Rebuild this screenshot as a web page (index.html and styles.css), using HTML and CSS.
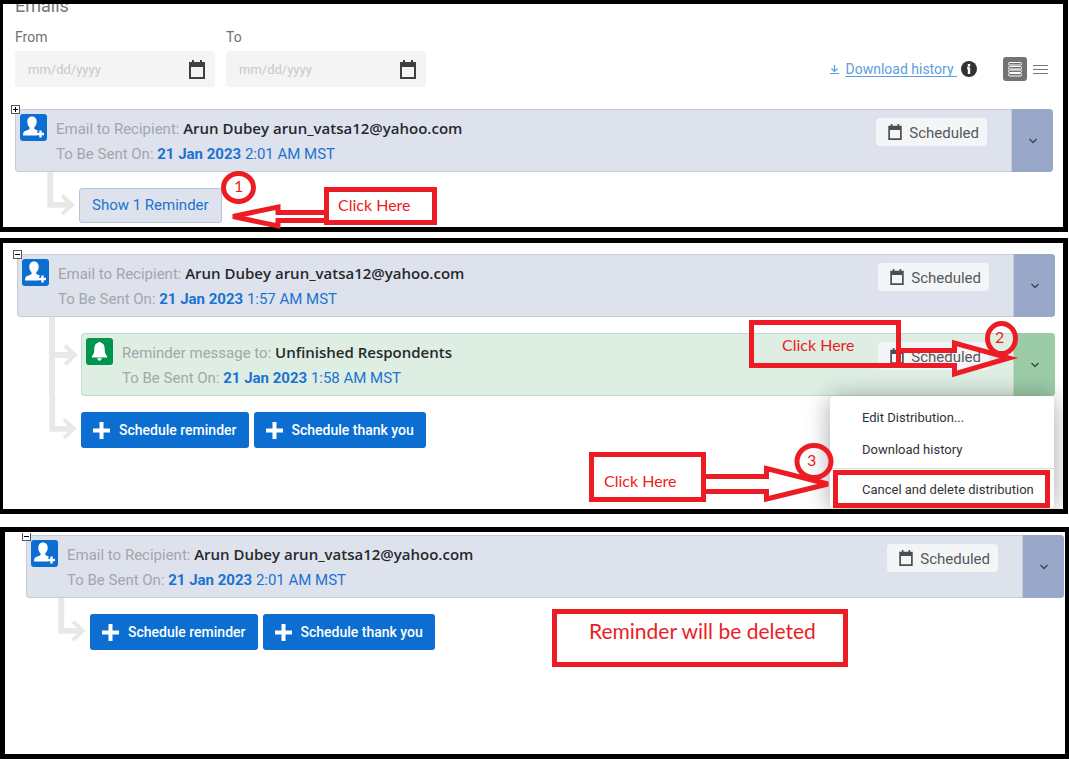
FILE: index.html
```html
<!DOCTYPE html>
<html lang="en">
<head>
<meta charset="utf-8">
<title>Emails</title>
<link rel="stylesheet" href="styles.css">
</head>
<body>
<svg class="defs" aria-hidden="true">
  <symbol id="calendar" viewBox="0 0 16 19"><path d="M3 0h2v2h6V0h2v2h3v17H0V2h3zM2 7v10h12V7z" fill="currentColor" fill-rule="evenodd"/></symbol>
  <symbol id="chevron" viewBox="0 0 10 6"><path d="M1.500 1l3.500 3.500L8.500 1" fill="none" stroke="currentColor" stroke-width="1.300"/></symbol>
  <symbol id="person" viewBox="0 0 27 27"><path d="M12 2.500c3 0 4.700 2.200 4.700 5.200 0 2.400-1.100 4.500-2.400 5.600v1.700l3.400 1.400v2.300h1.800v2.800H3c0-3 .8-4 2.900-4.700l3.600-1.500v-2c-1.300-1.100-2.200-3.200-2.200-5.600 0-3 1.700-5.200 4.700-5.200z" fill="#fff"/><path d="M20.500 16.500v7M17 20h7" stroke="#0b6ed0" stroke-width="4.600"/><path d="M20.500 16.500v7M17 20h7" stroke="#fff" stroke-width="2.400"/></symbol>
  <symbol id="bell" viewBox="0 0 27 27"><path d="M12.300 4.500q1.200-1.400 2.400 0c3 .8 4 3.200 4 6.500 0 4 .8 5.500 2.300 7v1.500H6V18c1.500-1.500 2.300-3 2.300-7 0-3.300 1-5.700 4-6.500zM11.200 20.300h4.600c-.3 1.700-1.200 2.400-2.300 2.400s-2-.7-2.300-2.400z" fill="#fff"/></symbol>
  <symbol id="plus" viewBox="0 0 17 17"><path d="M8.500 0v17M0 8.500h17" stroke="currentColor" stroke-width="4"/></symbol>
  <symbol id="branch-through" viewBox="0 0 32 79"><path d="M3 0v79M3 38h23" fill="none" stroke="#e8e8e8" stroke-width="6"/><path d="M16 28.500l10 9.500-10 9.500" fill="none" stroke="#e8e8e8" stroke-width="4"/></symbol>
  <symbol id="branch-end" viewBox="0 0 32 52"><path d="M3 0v33.500h22" fill="none" stroke="#e8e8e8" stroke-width="6"/><path d="M15 24l10 9.500-10 9.500" fill="none" stroke="#e8e8e8" stroke-width="4"/></symbol>
</svg>

<section class="panel panel-collapsed">
  <header class="title-clip"><h1 class="title">Emails</h1></header>
  <div class="filters">
    <div class="field">
      <label for="from">From</label>
      <div class="date-box"><input id="from" type="text" placeholder="mm/dd/yyyy"><svg class="date-icon"><use href="#calendar"/></svg></div>
    </div>
    <div class="field">
      <label for="to">To</label>
      <div class="date-box"><input id="to" type="text" placeholder="mm/dd/yyyy"><svg class="date-icon"><use href="#calendar"/></svg></div>
    </div>
    <div class="tools">
      <svg class="download-icon" viewBox="0 0 11 11"><path d="M5.500 1v6M2.500 4.500l3 3 3-3M1 9.500h9" fill="none" stroke="#5aa0e0" stroke-width="1.200"/></svg>
      <a class="download" href="#">Download history&nbsp;</a>
      <svg class="info-icon" viewBox="0 0 16 16"><circle cx="8" cy="8" r="8" fill="#333"/><path d="M8 3v2.400M8 6.500V13M6.200 7H8" stroke="#fff" stroke-width="2.400" fill="none"/></svg>
      <button class="view view-cards" aria-label="Card view"><svg viewBox="0 0 24 24"><g fill="none" stroke="#fff"><rect x="5.500" y="5.500" width="13" height="2.500" rx="1"/><rect x="5.500" y="9.500" width="13" height="2.500" rx="1"/><rect x="5.500" y="13" width="13" height="2.500" rx="1"/><rect x="5.500" y="16.500" width="13" height="2.500" rx="1"/></g></svg></button>
      <button class="view view-rows" aria-label="Row view"><svg viewBox="0 0 15 24"><path d="M0 8.500h15M0 12.500h15M0 16.500h15" stroke="#777"/></svg></button>
    </div>
  </div>
  <article class="card">
    <button class="expander" aria-label="Expand"><svg viewBox="0 0 9 9"><path d="M4.500 2v5M2 4.500h5" stroke="#000"/></svg></button>
    <svg class="avatar"><use href="#person"/></svg>
    <div class="info">
      <p>Email to Recipient: <strong>Arun Dubey arun_vatsa12@yahoo.com</strong></p>
      <p>To Be Sent On: <span class="when"><strong>21 Jan 2023</strong> 2:01 AM MST</span></p>
    </div>
    <span class="badge"><svg class="badge-icon"><use href="#calendar"/></svg>Scheduled</span>
    <button class="toggle" aria-label="Options"><svg class="chevron"><use href="#chevron"/></svg></button>
  </article>
  <div class="branch">
    <svg class="branch-end"><use href="#branch-end"/></svg>
    <button class="show">Show 1 Reminder</button>
  </div>
  <svg class="notes notes-first" viewBox="217 168 224 63">
    <rect x="326.500" y="189.500" width="108" height="33"/>
    <ellipse cx="238.500" cy="187.500" rx="15" ry="14"/>
    <path d="M324 212.500H278V207L233 216.500L278 226V220.500H324"/>
    <text x="234" y="192">1</text><text x="338" y="211">Click Here</text>
  </svg>
</section>

<section class="panel panel-expanded">
  <article class="card">
    <button class="expander" aria-label="Collapse"><svg viewBox="0 0 9 9"><path d="M2 4.500h5" stroke="#000"/></svg></button>
    <svg class="avatar"><use href="#person"/></svg>
    <div class="info">
      <p>Email to Recipient: <strong>Arun Dubey arun_vatsa12@yahoo.com</strong></p>
      <p>To Be Sent On: <span class="when"><strong>21 Jan 2023</strong> 1:57 AM MST</span></p>
    </div>
    <span class="badge"><svg class="badge-icon"><use href="#calendar"/></svg>Scheduled</span>
    <button class="toggle" aria-label="Options"><svg class="chevron"><use href="#chevron"/></svg></button>
  </article>
  <div class="branch">
    <svg class="branch-through"><use href="#branch-through"/></svg>
    <article class="card card-reminder">
      <svg class="avatar"><use href="#bell"/></svg>
      <div class="info">
        <p>Reminder message to: <strong>Unfinished Respondents</strong></p>
        <p>To Be Sent On: <span class="when"><strong>21 Jan 2023</strong> 1:58 AM MST</span></p>
      </div>
      <span class="badge"><svg class="badge-icon"><use href="#calendar"/></svg>Scheduled</span>
      <button class="toggle" aria-label="Options"><svg class="chevron"><use href="#chevron"/></svg></button>
      <div class="menu">
        <button>Edit Distribution...</button>
        <button>Download history</button>
        <hr>
        <button>Cancel and delete distribution</button>
      </div>
    </article>
  </div>
  <div class="branch">
    <svg class="branch-end"><use href="#branch-end"/></svg>
    <div class="actions">
      <button class="primary"><svg class="plus"><use href="#plus"/></svg>Schedule reminder</button>
      <button class="primary"><svg class="plus"><use href="#plus"/></svg>Schedule thank you</button>
    </div>
  </div>
  <svg class="notes notes-second" viewBox="580 243 483 266">
    <rect x="751.500" y="322.500" width="147" height="43"/>
    <path d="M901 350.500H954.500V343L1009 358L954.500 374V365.500H901"/>
    <ellipse cx="1001.500" cy="338.500" rx="14" ry="15"/>
    <rect x="591.500" y="454.500" width="112" height="45"/>
    <path d="M706 476.500H766.500V468.500L828 484L766.500 499V491.500H706"/>
    <ellipse cx="814" cy="461.500" rx="17" ry="16"/>
    <rect x="835.500" y="472.500" width="212" height="33"/>
    <text x="782" y="351">Click Here</text><text x="995" y="343">2</text>
    <text x="604" y="487">Click Here</text><text x="807" y="466">3</text>
  </svg>
</section>

<section class="panel panel-deleted">
  <article class="card">
    <button class="expander expander-cut" aria-label="Collapse"><svg viewBox="0 0 9 9"><path d="M2 4.500h5" stroke="#000"/></svg></button>
    <svg class="avatar"><use href="#person"/></svg>
    <div class="info">
      <p>Email to Recipient: <strong>Arun Dubey arun_vatsa12@yahoo.com</strong></p>
      <p>To Be Sent On: <span class="when"><strong>21 Jan 2023</strong> 2:01 AM MST</span></p>
    </div>
    <span class="badge"><svg class="badge-icon"><use href="#calendar"/></svg>Scheduled</span>
    <button class="toggle" aria-label="Options"><svg class="chevron"><use href="#chevron"/></svg></button>
  </article>
  <div class="branch">
    <svg class="branch-end"><use href="#branch-end"/></svg>
    <div class="actions">
      <button class="primary"><svg class="plus"><use href="#plus"/></svg>Schedule reminder</button>
      <button class="primary"><svg class="plus"><use href="#plus"/></svg>Schedule thank you</button>
    </div>
  </div>
  <div class="result">Reminder will be deleted</div>
</section>
</body>
</html>
```
FILE: styles.css
```css
* { box-sizing: border-box; }
body { margin: 0; background: #fff; font: 15px/25px Roboto, "Open Sans", sans-serif; color: #a3a6a9; }
button, input { font: inherit; border: 0; padding: 0; margin: 0; background: none; }
p, h1 { margin: 0; }
svg { display: block; flex: none; }
.defs { position: absolute; width: 0; height: 0; }

.panel { position: relative; border: 5px solid #000; border-left-width: 3px; margin-right: 1px; }
.panel-collapsed { border-top-width: 4px; padding: 0 10px 4px 12px; }
.panel-expanded { margin-top: 6px; padding: 11px 8px 61px 14px; overflow: hidden; }
.panel-deleted { margin: 13px 0 0; border-left-width: 5px; border-right-width: 4px; padding: 3px 1px 104px 21px; }

.title-clip { overflow: hidden; }
.title { margin-top: -10px; font-size: 18px; font-weight: 400; line-height: 24px; color: #777; }
.filters { display: flex; align-items: flex-end; gap: 11px; padding: 9px 5px 22px 0; }
.field { width: 200px; }
.field label { display: block; font-size: 14px; line-height: 20px; margin-bottom: 4px; color: #6e7276; }
.date-box { display: flex; align-items: center; height: 36px; padding: 0 10px 0 13px; border-radius: 4px; background: #f4f4f4; }
.date-box input { flex: 1; min-width: 0; font-size: 13px; outline: 0; }
.date-box input::placeholder { color: #c8c8c8; opacity: 1; }
.date-icon { width: 16px; height: 19px; color: #404040; }
.tools { display: flex; align-items: center; height: 36px; margin-left: auto; font-size: 14px; }
.download-icon { width: 11px; height: 11px; margin-right: 5px; }
.download { color: #5aa0e0; text-underline-offset: 2px; text-decoration-skip-ink: none; }
.info-icon { width: 16px; height: 16px; margin: 0 26px 0 4px; }
.view svg { height: 24px; }
.view-cards { border-radius: 3px; background: #737373; }
.view-cards svg { width: 24px; }
.view-rows { margin-left: 6px; }
.view-rows svg { width: 15px; }

.card { position: relative; display: flex; align-items: flex-start; flex: 1; border: 1px solid #c6cbd8; border-right: 0; border-radius: 4px; background: #dee2ec; }
.avatar { width: 27px; height: 27px; margin: 4px 9px 0 4px; border-radius: 3px; background: #0b6ed0; }
.info { flex: 1; padding: 7px 0 4px; }
.info p { height: 25px; }
.info strong { font-family: "Open Sans", sans-serif; font-weight: 600; line-height: 20px; color: #26292c; }
.info .when, .info .when strong { color: #1a73d2; }
.info .when strong { font-family: inherit; font-weight: 700; }
.badge { display: flex; align-items: center; gap: 7px; height: 28px; margin: 8px 24px 0 0; padding: 2px 8px 0 12px; border-radius: 4px; background: #f4f5f7; color: #54585c; }
.badge-icon { width: 14px; height: 16px; color: #4a4e52; margin-bottom: 2px; }
.toggle { display: flex; align-items: center; justify-content: center; align-self: stretch; width: 42px; margin: -1px 0; border-left: 1px solid #c6cbd8; border-radius: 0 4px 4px 0; background: #99a7c9; color: #3a4350; }
.chevron { width: 10px; height: 6px; }
.expander { position: absolute; left: -5px; top: -5px; width: 9px; height: 9px; background: #fff; outline: 1px solid #555; outline-offset: -1px; }
.expander svg { width: 9px; height: 9px; }
.expander-cut { top: -4px; clip-path: inset(1px 0 0); }
.card-reminder { border-color: #c5dacb; background: #deeee3; }
.card-reminder .avatar { background: #00954c; }
.card-reminder .toggle { border-color: #c5dacb; background: #9bcba7; }

.branch { display: flex; margin-left: 32px; }
.branch > :not(svg) { margin-top: 16px; }
.branch-end { width: 32px; height: 51px; }
.branch-through { width: 32px; height: 79px; }
.show { height: 35px; padding: 0 12px; border: 1px solid #b8c3da; border-radius: 3px; background: #dee2ec; color: #1a73d2; }
.actions { display: flex; gap: 5px; }
.primary { display: flex; align-items: center; gap: 9px; height: 36px; padding: 0 12px; border-radius: 3px; background: #0b6ed0; color: #fff; font-size: 14px; font-weight: 500; }
.plus { width: 17px; height: 17px; }

.menu { position: absolute; top: 62px; right: 1px; width: 224px; padding: 5px 0 3px; border-radius: 4px; background: #fff; box-shadow: 0 2px 24px rgba(0, 0, 0, .35); }
.menu button { display: block; width: 100%; height: 32px; padding-left: 32px; text-align: left; font-size: 13px; color: #303336; }
.menu hr { margin: 3px 0 4px; border: 0; border-top: 1px solid #dedede; }

.notes { position: absolute; fill: none; stroke: #ed1c24; stroke-width: 5px; pointer-events: none; }
.notes text { fill: #ed1c24; stroke: none; font: 16px Lato, sans-serif; }
.notes-first { left: 214px; top: 164px; width: 224px; height: 63px; }
.notes-second { right: 0; top: 0; width: 483px; height: 266px; }
.result { position: absolute; left: 547px; top: 77px; width: 296px; height: 58px; border: 5px solid #ed1c24; padding-left: 32px; font: 21px/34px Lato, sans-serif; color: #ed1c24; }
```
